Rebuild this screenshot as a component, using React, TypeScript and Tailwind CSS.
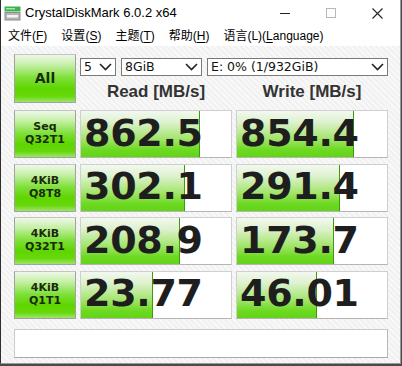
import React from "react";

const rows = [
  { l1: "Seq", l2: "Q32T1", r: "862.5", rw: 119, w: "854.4", ww: 117 },
  { l1: "4KiB", l2: "Q8T8", r: "302.1", rw: 104, w: "291.4", ww: 103 },
  { l1: "4KiB", l2: "Q32T1", r: "208.9", rw: 99, w: "173.7", ww: 97 },
  { l1: "4KiB", l2: "Q1T1", r: "23.77", rw: 72, w: "46.01", ww: 80 },
];

function Chevron() {
  return (
    <svg width="13" height="8" viewBox="0 0 13 8" className="shrink-0">
      <polyline points="1,1 6.5,6.5 12,1" fill="none" stroke="#222" strokeWidth="1.6" />
    </svg>
  );
}

function Select({ text, w }: { text: string; w: string }) {
  return (
    <div
      className={`${w} h-[18px] bg-white border border-[#7a7a7a] flex items-center justify-between pl-[3px] pr-[3px] text-[12.5px] text-[#111] leading-none`}
      style={{ fontFamily: '"DejaVu Sans", sans-serif' }}
    >
      <span>{text}</span>
      <Chevron />
    </div>
  );
}

function ValueBox({ value, fill }: { value: string; fill: number }) {
  return (
    <div className="relative h-full bg-white border border-[#cfcfcf] border-b-[#b5b5b5]">
      <div
        className="absolute left-0 top-0 bottom-0 bg-[linear-gradient(to_bottom,#f3f8f0_0%,#dcf1cd_25%,#a4e56c_60%,#6cd922_85%,#62d514_100%)] border-r border-[#3e9a0c]"
        style={{ width: fill }}
      />
      <div
        className="relative h-full flex items-center pl-[3px] pb-[3px] text-[38px] font-bold leading-none text-[#1e1e1e] tracking-[-0.3px]"
        style={{ fontFamily: '"DejaVu Sans", sans-serif' }}
      >
        {value}
      </div>
    </div>
  );
}

function GreenBox({ children, className = "" }: { children: React.ReactNode; className?: string }) {
  return (
    <div
      className={`border border-[#a2a2a2] border-t-[#c4c4c4] bg-[linear-gradient(to_bottom,#eef8e8_0%,#c4efa4_22%,#7fe03a_48%,#5ed500_72%,#68d80c_88%,#9be56a_100%)] flex flex-col items-center justify-center text-[#1b2a0b] ${className}`}
      style={{ fontFamily: '"DejaVu Sans", sans-serif' }}
    >
      {children}
    </div>
  );
}

function MenuItem({ cn, k, rest }: { cn: string; k: string; rest?: string }) {
  return (
    <span className="whitespace-nowrap">
      {cn}(<span className="underline underline-offset-2">{k}</span>){rest}
    </span>
  );
}

export default function App() {
  return (
    <div className="w-[402px] h-[366px] bg-[#4a4a4a] overflow-hidden">
      <div className="w-[401px] h-[364px] bg-white border-l border-[#2e2e2e] border-r border-r-[#9a9a9a] border-b border-b-[#9a9a9a] flex flex-col">
        {/* Title bar */}
        <div
          className="h-[26px] flex items-center bg-white text-[13px] text-black"
          style={{ fontFamily: '"Liberation Sans", sans-serif' }}
        >
          <svg width="17" height="15" viewBox="0 0 17 15" className="ml-[3px] mr-[4px] shrink-0">
            <rect x="0.5" y="0.5" width="16" height="5" fill="#36b34a" />
            <rect x="2" y="2" width="9" height="1.5" fill="#a6e3ae" />
            <rect x="0.5" y="6" width="16" height="8.5" fill="#8c8c8c" />
            <rect x="1.5" y="7" width="14" height="6.5" fill="#b5b5b5" />
            <rect x="3" y="9" width="11" height="2.5" fill="#f4f4f4" />
          </svg>
          <span>CrystalDiskMark 6.0.2 x64</span>
          <div className="ml-auto flex h-full">
            <div className="w-[46px] h-full flex items-center justify-center">
              <div className="w-[10px] h-[1px] bg-[#222]" />
            </div>
            <div className="w-[46px] h-full flex items-center justify-center">
              <div className="w-[10px] h-[10px] border border-[#b8b8b8]" />
            </div>
            <div className="w-[46px] h-full flex items-center justify-center">
              <svg width="11" height="11" viewBox="0 0 11 11">
                <path d="M0.5 0.5 L10.5 10.5 M10.5 0.5 L0.5 10.5" stroke="#222" strokeWidth="1.1" />
              </svg>
            </div>
          </div>
        </div>
        {/* Menu bar */}
        <div
          className="h-[20px] flex items-center gap-[14px] pl-[7px] bg-white text-[12px] text-black"
          style={{ fontFamily: '"Liberation Sans", "Noto Sans CJK SC", sans-serif' }}
        >
          <MenuItem cn="文件" k="F" />
          <MenuItem cn="设置" k="S" />
          <MenuItem cn="主题" k="T" />
          <MenuItem cn="帮助" k="H" />
          <span className="whitespace-nowrap">
            语言(L)(<span className="underline underline-offset-2">L</span>anguage)
          </span>
        </div>
        {/* Main */}
        <div className="flex-1 bg-[repeating-linear-gradient(45deg,#f1f1f1_0px,#f1f1f1_2px,#f8f8f8_2px,#f8f8f8_4px)] pl-[13px] pt-[8px] flex flex-col">
          <div className="grid grid-cols-[62px_152px_152px] gap-x-[4px]">
            <GreenBox className="h-[49px] text-[14px] font-bold">All</GreenBox>
            <div className="col-span-2 flex flex-col">
              <div className="flex gap-[5px] mt-[4px]">
                <Select text="5" w="w-[36px]" />
                <Select text="8GiB" w="w-[81px]" />
                <Select text="E: 0% (1/932GiB)" w="w-[181px]" />
              </div>
              <div
                className="grid grid-cols-[152px_152px] gap-x-[4px] mt-[4px] text-[17px] font-bold text-[#333] leading-none"
                style={{ fontFamily: '"Liberation Sans", sans-serif' }}
              >
                <div className="text-center pt-[3px]">Read [MB/s]</div>
                <div className="text-center pt-[3px]">Write [MB/s]</div>
              </div>
            </div>
          </div>
          <div className="mt-[7px] flex flex-col gap-[5.5px]">
            {rows.map((r, i) => (
              <div key={i} className="grid grid-cols-[62px_152px_152px] gap-x-[4px] h-[48px]">
                <GreenBox className="h-full text-[11px] font-bold leading-[13px] pb-[2px]">
                  <span>{r.l1}</span>
                  <span>{r.l2}</span>
                </GreenBox>
                <ValueBox value={r.r} fill={r.rw} />
                <ValueBox value={r.w} fill={r.ww} />
              </div>
            ))}
          </div>
          <div className="mt-[10px] w-[374px] h-[29px] bg-white border border-[#cbcbcb] border-b-[#a9a9a9] border-r-[#b9b9b9]" />
        </div>
      </div>
    </div>
  );
}
